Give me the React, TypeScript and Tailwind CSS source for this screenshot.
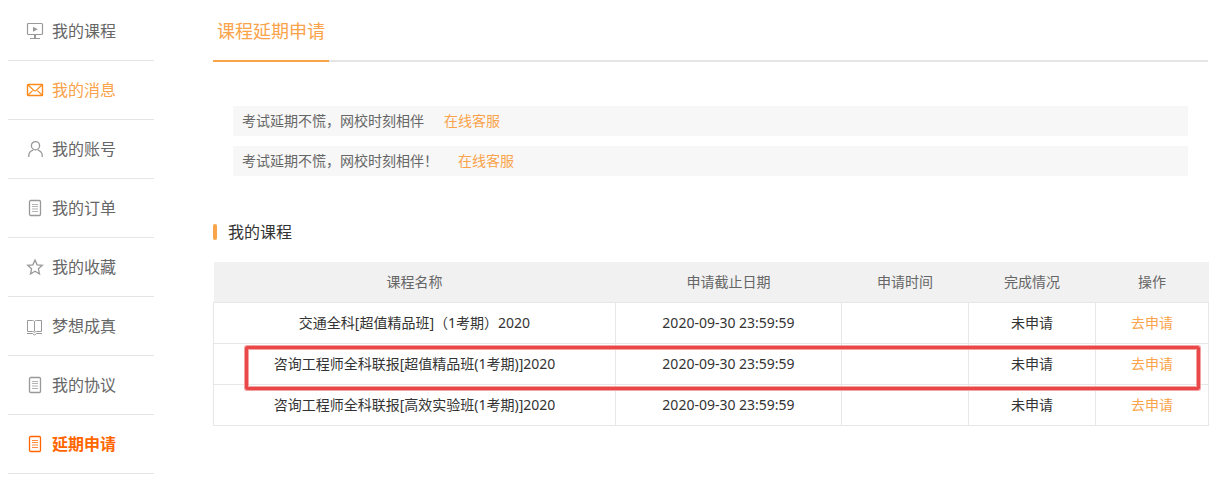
import type { ReactNode } from "react";
import { clsx } from "clsx";

const DocIcon = () => (
  <>
    <rect x="2.5" y="0.5" width="11" height="15" rx="1.2" strokeWidth="1.3" />
    <path d="M5 4.5h6M5 6.5h6M5 9h6M5 11.5h6" opacity="0.75" />
  </>
);

type NavItem = {
  label: string;
  icon: ReactNode;
  state?: "hover" | "active";
};

const navItems: NavItem[] = [
  {
    label: "我的课程",
    icon: (
      <>
        <rect x="0.5" y="0.5" width="15" height="11" rx="1" strokeWidth="1.2" />
        <path d="M7.5 12v3.5M8.5 12v3.5M3 15.5h10" />
        <path d="M6 3.8v5l4.8-2.5z" fill="currentColor" stroke="none" />
      </>
    ),
  },
  {
    label: "我的消息",
    state: "hover",
    icon: (
      <>
        <rect x="0.5" y="2.5" width="15" height="11" rx="0.6" strokeWidth="1.4" />
        <path d="M1 3l5.8 5.4a1.8 1.8 0 0 0 2.4 0L15 3M1 13l4.6-4.4M15 13l-4.6-4.4" strokeWidth="1.2" />
      </>
    ),
  },
  {
    label: "我的账号",
    icon: (
      <>
        <circle cx="8.5" cy="4.7" r="4.1" strokeWidth="1.3" />
        <path d="M1.8 16v-1.5c0-2.6 1.7-4.6 4.4-5.4M15.2 16v-1.5c0-2.6-1.7-4.6-4.4-5.4" strokeWidth="1.3" />
      </>
    ),
  },
  { label: "我的订单", icon: <DocIcon /> },
  {
    label: "我的收藏",
    icon: (
      <path
        d="M8 1l2.1 4.8 5.2.5-3.9 3.5 1.1 5.2L8 12.3 3.5 15l1.1-5.2L.7 6.3l5.2-.5z"
        strokeWidth="1.3"
      />
    ),
  },
  {
    label: "梦想成真",
    icon: (
      <>
        <path d="M7.5 3.5c-.4-.7-1-1-2-1h-5v11h5c1 0 1.6.3 2 1 .4-.7 1-1 2-1h5v-11h-5c-1 0-1.6.3-2 1zM7.5 3.5v10" />
        <path d="M0 15.5h5.5l2 1.6 2-1.6H15" />
      </>
    ),
  },
  { label: "我的协议", icon: <DocIcon /> },
  { label: "延期申请", state: "active", icon: <DocIcon /> },
];

const notices = ["考试延期不慌，网校时刻相伴", "考试延期不慌，网校时刻相伴！"];

const courses = [
  { name: "交通全科[超值精品班]（1考期）2020", deadline: "2020-09-30 23:59:59" },
  { name: "咨询工程师全科联报[超值精品班(1考期)]2020", deadline: "2020-09-30 23:59:59" },
  { name: "咨询工程师全科联报[高效实验班(1考期)]2020", deadline: "2020-09-30 23:59:59" },
];

function Sidebar() {
  return (
    <nav className="w-[146px] shrink-0">
      <ul>
        {navItems.map((item) => (
          <li key={item.label} className="border-b border-[#e5e5e5]">
            <a
              href="#"
              className={clsx(
                "flex h-[58px] items-center gap-[9px] pl-[19px] text-base",
                !item.state && "text-[#666]",
                item.state === "hover" && "text-[#faa34a]",
                item.state === "active" && "font-bold text-[#ff6600]"
              )}
            >
              <svg
                viewBox="0 0 16 16"
                fill="none"
                stroke="currentColor"
                className={clsx(
                  "size-4 shrink-0 overflow-visible",
                  !item.state && "text-[#999]",
                  item.state === "hover" && "text-[#ff8a1a]"
                )}
              >
                {item.icon}
              </svg>
              {item.label}
            </a>
          </li>
        ))}
      </ul>
    </nav>
  );
}

function CourseTable() {
  return (
    <div className="relative mt-[18px]">
      <table className="w-full table-fixed border-collapse text-center text-sm leading-5">
        <thead>
          <tr className="h-10 bg-[#f1f1f1] text-[#666]">
            <th className="w-[402px] font-normal">课程名称</th>
            <th className="w-[226px] font-normal">申请截止日期</th>
            <th className="w-[127px] font-normal">申请时间</th>
            <th className="w-[127px] font-normal">完成情况</th>
            <th className="w-[113px] font-normal">操作</th>
          </tr>
        </thead>
        <tbody className="text-[#333]">
          {courses.map((course) => (
            <tr key={course.name} className="h-[41px]">
              <td className="border border-[#e7e7e7]">{course.name}</td>
              <td className="border border-[#e7e7e7]">{course.deadline}</td>
              <td className="border border-[#e7e7e7]"></td>
              <td className="border border-[#e7e7e7]">未申请</td>
              <td className="border border-[#e7e7e7]">
                <a href="#" className="text-[#faa34a]">
                  去申请
                </a>
              </td>
            </tr>
          ))}
        </tbody>
      </table>
      {/* marker around the second course */}
      <div className="pointer-events-none absolute top-[84px] right-2 left-8 h-11 rounded-xs border-3 border-[#ea4848] shadow-[0_0_0_1px_#f4a3a3,inset_0_0_0_1px_#f4a3a3]" />
    </div>
  );
}

export default function App() {
  return (
    <div className="flex gap-[59px] bg-white pt-[2px] pr-[19px] pb-7 pl-2 font-['Noto_Sans','Noto_Sans_CJK_SC',sans-serif]">
      <Sidebar />
      <main className="min-w-0 flex-1">
        <div className="flex h-[60px] border-b-2 border-[#e5e5e5]">
          <h1 className="-mb-[2px] flex h-[60px] items-center border-b-2 border-[#faa34a] px-1 text-lg text-[#faa34a]">
            课程延期申请
          </h1>
        </div>

        <div className="mx-5 mt-11 space-y-[10px]">
          {notices.map((text) => (
            <p key={text} className="flex h-[30px] items-center gap-5 bg-[#f7f7f7] px-[9px] text-sm text-[#666]">
              {text}
              <a href="#" className="text-[#faa34a]">
                在线客服
              </a>
            </p>
          ))}
        </div>

        <h2 className="mt-11 flex items-center gap-[11px] text-base leading-6 text-[#333]">
          <span className="h-4 w-1 rounded-xs bg-[#faa34a]" />
          我的课程
        </h2>
        <CourseTable />
      </main>
    </div>
  );
}
